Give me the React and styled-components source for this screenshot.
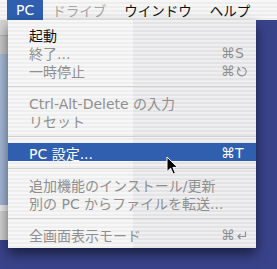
import React from "react";
import styled, { createGlobalStyle } from "styled-components";

const GlobalStyle = createGlobalStyle`
    html, body {
        margin: 0;
        padding: 0;
        background: #39438a;
    }
    body {
        font-family: "DejaVu Sans", "Noto Sans CJK JP", sans-serif;
        -webkit-font-smoothing: antialiased;
    }
`;

// デスクトップ全体
const Desktop = styled.div`
    position: relative;
    width: 277px;
    height: 269px;
    overflow: hidden;
    background: #39438a;
    display: flex;
    flex-direction: column;
`;

// 上部メニューバー
const MenuBar = styled.div`
    position: relative;
    z-index: 2;
    display: flex;
    align-items: stretch;
    height: 20px;
    padding-left: 7px;
    background: repeating-linear-gradient(
        to bottom,
        #f7f7f7 0px,
        #f7f7f7 2px,
        #ededed 2px,
        #ededed 4px
    );
    font-size: 14px;
`;

const MenuTitle = styled.div`
    display: flex;
    align-items: center;
    padding: 0 9px;
    font-size: ${({ $small }) => ($small ? "13.5px" : "14px")};
    color: ${({ $active, $disabled }) =>
        $active ? "#fff" : $disabled ? "#a6a6a6" : "#111"};
    background: ${({ $active }) => ($active ? "#2f5fae" : "transparent")};
    white-space: nowrap;
`;

// 背後のウインドウ (デスクトップ上の窓)
const BackWindow = styled.div`
    position: absolute;
    left: -40px;
    top: 20px;
    width: 175px;
    height: 220px;
    background: linear-gradient(
        to bottom,
        #d4d4d4 0px,
        #d4d4d4 15px,
        #b4b4b4 15px,
        #b4b4b4 16px,
        #c9c9c9 16px,
        #c9c9c9 34px,
        #a9bcda 34px,
        #a3b6d5 185px,
        #ececec 185px,
        #ececec 191px,
        #d3d3d3 191px
    );
`;

// プルダウンメニュー
const Dropdown = styled.div`
    position: absolute;
    z-index: 3;
    left: 8px;
    top: 20px;
    width: 248px;
    padding: 5px 0;
    box-sizing: border-box;
    background:
        repeating-linear-gradient(
            to bottom,
            rgba(255, 255, 255, 0.35) 0px,
            rgba(255, 255, 255, 0.35) 2px,
            rgba(0, 0, 0, 0.015) 2px,
            rgba(0, 0, 0, 0.015) 4px
        ),
        linear-gradient(to right, #f2f2f2 0px, #f2f2f2 125px, #e7e7e9 125px);
    box-shadow: 0 6px 12px rgba(0, 0, 0, 0.55);
    font-size: 14px;
`;

const Item = styled.div`
    display: grid;
    grid-template-columns: 1fr 35px;
    align-items: center;
    height: 18px;
    padding-left: 21px;
    color: ${({ $active, $disabled }) =>
        $active ? "#fff" : $disabled ? "#8f8f8f" : "#111"};
    background: ${({ $active }) => ($active ? "#2f5fae" : "transparent")};
    white-space: nowrap;
`;

const Shortcut = styled.span`
    display: flex;
    align-items: center;
    gap: 1px;
`;

const Separator = styled.div`
    height: 14px;
    display: flex;
    align-items: center;

    &::after {
        content: "";
        flex: 1;
        height: 1px;
        background: #d2d2d2;
    }
`;

const KeyIcon = styled.svg`
    width: 11px;
    height: 11px;
    stroke: currentColor;
    fill: none;
    stroke-width: 1.2;
`;

// マウスカーソル
const Cursor = styled.svg`
    position: absolute;
    z-index: 4;
    left: 166px;
    top: 156px;
    width: 13px;
    height: 20px;
`;

const PauseGlyph = () => (
    <KeyIcon viewBox="0 0 11 11">
        <path d="M3.2 2.2 A4.3 4.3 0 1 0 6.2 1.3" />
        <path d="M1.8 1.2 L4.4 4.6" />
    </KeyIcon>
);

const ReturnGlyph = () => (
    <KeyIcon viewBox="0 0 11 11">
        <path d="M9.5 1.5 V6.5 H2" />
        <path d="M4.5 4 L2 6.5 L4.5 9" />
    </KeyIcon>
);

const menuItems = [
    { label: "起動" },
    { label: "終了...", disabled: true, key: "S" },
    { label: "一時停止", disabled: true, key: <PauseGlyph /> },
    { sep: true },
    { label: "Ctrl-Alt-Delete の入力", disabled: true },
    { label: "リセット", disabled: true },
    { sep: true },
    { label: "PC 設定...", active: true, key: "T" },
    { sep: true },
    { label: "追加機能のインストール/更新", disabled: true },
    { label: "別の PC からファイルを転送...", disabled: true },
    { sep: true },
    { label: "全画面表示モード", disabled: true, key: <ReturnGlyph /> },
];

function App() {
    return (
        <Desktop>
            <GlobalStyle />
            <MenuBar>
                <MenuTitle $active>PC</MenuTitle>
                <MenuTitle $disabled $small>ドライブ</MenuTitle>
                <MenuTitle $small>ウインドウ</MenuTitle>
                <MenuTitle $small>ヘルプ</MenuTitle>
            </MenuBar>

            <BackWindow />

            <Dropdown>
                {menuItems.map((item, i) =>
                    item.sep ? (
                        <Separator key={i} />
                    ) : (
                        <Item key={i} $active={item.active} $disabled={item.disabled}>
                            <span>{item.label}</span>
                            {item.key ? (
                                <Shortcut>
                                    ⌘{item.key}
                                </Shortcut>
                            ) : (
                                <span />
                            )}
                        </Item>
                    )
                )}
            </Dropdown>

            <Cursor viewBox="0 0 13 20">
                <path
                    d="M1 1 L1 15.5 L4.6 12.2 L7.2 18 L9.4 17 L6.9 11.4 L11.6 11.4 Z"
                    fill="#000"
                    stroke="#fff"
                    strokeWidth="1"
                    strokeLinejoin="round"
                />
            </Cursor>
        </Desktop>
    );
}

export default App;
